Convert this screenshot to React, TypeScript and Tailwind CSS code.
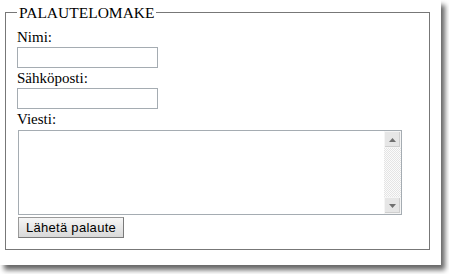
import { useState } from 'react'

function ScrollArrow({ up }: { up: boolean }) {
	return (
		<div className="flex h-[17px] w-[17px] items-center justify-center border border-[#f5f5f5] bg-[#e6e6e6] shadow-[inset_-1px_-1px_0_#cfcfcf]">
			<svg width="7" height="4" viewBox="0 0 7 4">
				<path d={up ? 'M0 4 L3.5 0 L7 4 Z' : 'M0 0 L3.5 4 L7 0 Z'} fill="#707070" />
			</svg>
		</div>
	)
}

export default function App() {
	const [name, setName] = useState('')
	const [email, setEmail] = useState('')
	const [message, setMessage] = useState('')

	const inputClass =
		'block h-[21px] w-[141px] border border-[#a5acb2] bg-white px-[2px] text-[13px] outline-none'
	const labelClass = 'block h-[20px] pt-[1px] text-[15px] leading-[19px]'

	return (
		<div className="h-[274px] w-[449px] bg-white font-['Liberation_Serif',serif] text-black">
			<div className="h-[265px] w-[441px] bg-white pl-[5px] pt-[3px] shadow-[4px_5px_5px_rgba(0,0,0,0.6)]">
				<fieldset className="h-[247px] w-[425px] border border-[#777777] pl-[11px] pt-[5px]">
					<legend className="px-[2px] text-[15.5px] leading-[19px]">PALAUTELOMAKE</legend>

					<label className={labelClass}>Nimi:</label>
					<input
						className={inputClass}
						value={name}
						onChange={(e) => setName(e.target.value)}
					/>

					<label className={labelClass}>Sähköposti:</label>
					<input
						className={inputClass}
						value={email}
						onChange={(e) => setEmail(e.target.value)}
					/>

					<label className="block h-[21px] pt-[1px] text-[15px] leading-[19px]">Viesti:</label>
					<div className="ml-[1px] flex h-[85px] w-[384px] border border-[#a5acb2] bg-white">
						<textarea
							className="h-full flex-1 resize-none overflow-hidden px-[2px] text-[13px] outline-none"
							value={message}
							onChange={(e) => setMessage(e.target.value)}
						/>
						<div className="flex w-[17px] flex-col bg-[repeating-conic-gradient(#e4e4e4_0%_25%,#fbfbfb_0%_50%)] bg-[length:2px_2px]">
							<ScrollArrow up />
							<div className="flex-1" />
							<ScrollArrow up={false} />
						</div>
					</div>

					<button
						type="button"
						className="ml-[1px] mt-[2px] h-[21px] w-[106px] border border-[#9a9a9a] border-b-[#7a7a7a] border-r-[#7a7a7a] bg-gradient-to-b from-[#f6f6f6] to-[#d9d9d9] font-['Liberation_Sans',Arial,sans-serif] text-[13px] leading-[19px] tracking-[0.3px]"
					>
						Lähetä palaute
					</button>
				</fieldset>
			</div>
		</div>
	)
}
